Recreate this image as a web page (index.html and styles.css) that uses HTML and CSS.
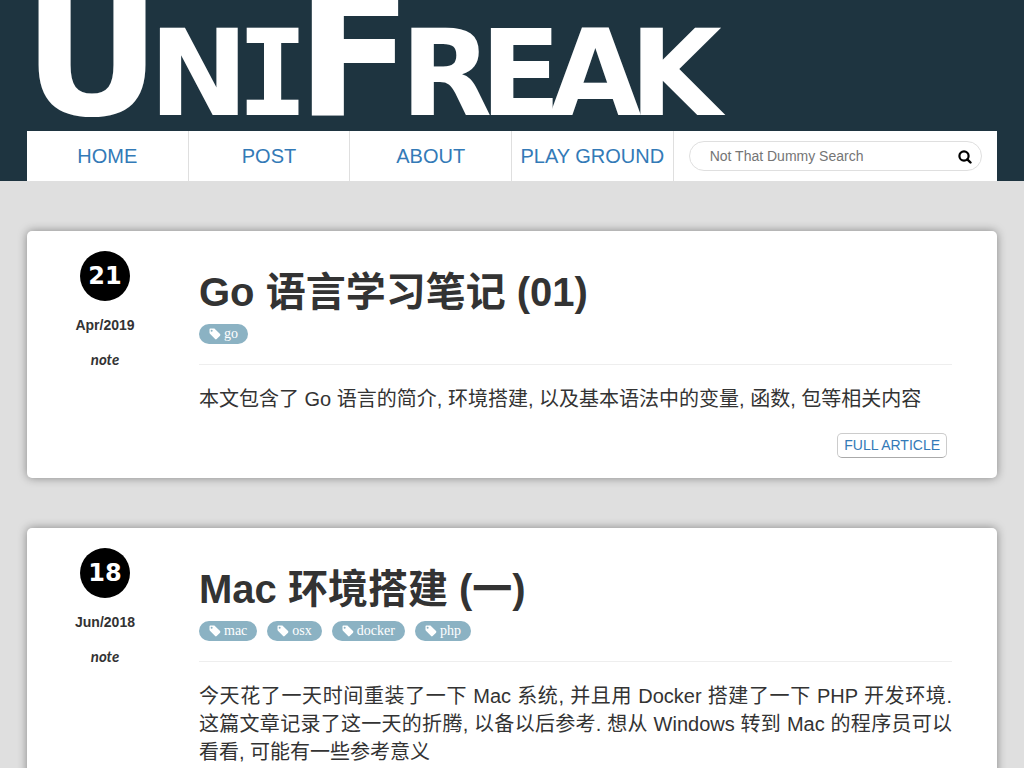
FILE: index.html
```html
<!DOCTYPE html>
<html lang="zh-CN">
<head>
<meta charset="utf-8">
<meta name="viewport" content="width=device-width, initial-scale=1">
<title>UniFreak</title>
<link rel="stylesheet" href="styles.css">
</head>
<body>
<svg class="sprite" aria-hidden="true">
  <symbol id="tag" viewBox="0 0 24 24"><path fill-rule="evenodd" d="M1 2.500v7.200c0 .8.4 1.500.9 2l10.300 10.400c.9.9 2.200.9 3.100 0l6.800-6.800c.9-.9.9-2.200 0-3.100L11.800 1.900C11.300 1.300 10.500 1 9.700 1H2.500C1.700 1 1 1.700 1 2.500zM5.300 3.300a2 2 0 1 1 0 4 2 2 0 0 1 0-4z"/></symbol>
  <symbol id="search" viewBox="0 0 14 14"><circle cx="6" cy="6" r="4.600" fill="none" stroke="currentColor" stroke-width="2.200"/><path d="M9.300 9.300l3.200 3.200" stroke="currentColor" stroke-width="2.400" stroke-linecap="round"/></symbol>
</svg>
<header class="header">
  <div class="container">
    <h1 class="logo">Un<span class="logo-slab">i</span>Freak</h1>
    <div class="bar">
      <nav class="nav">
        <a href="#">HOME</a>
        <a href="#">POST</a>
        <a href="#">ABOUT</a>
        <a href="#">PLAY GROUND</a>
      </nav>
      <form class="search">
        <input class="search-input" type="text" aria-label="Search" placeholder="Not That Dummy Search">
        <button class="search-button" type="submit" aria-label="Search"><svg class="search-icon"><use href="#search"/></svg></button>
      </form>
    </div>
  </div>
</header>
<main class="container posts">
  <article class="post">
    <div class="meta">
      <div class="day">21</div>
      <div class="month">Apr/2019</div>
      <div class="kind">note</div>
    </div>
    <div class="content">
      <h2 class="title">Go 语言学习笔记 (01)</h2>
      <div class="tags">
        <a class="tag" href="#"><svg class="tag-icon"><use href="#tag"/></svg>go</a>
      </div>
      <p class="summary">本文包含了 Go 语言的简介, 环境搭建, 以及基本语法中的变量, 函数, 包等相关内容</p>
      <a class="more" href="#">FULL ARTICLE</a>
    </div>
  </article>
  <article class="post">
    <div class="meta">
      <div class="day">18</div>
      <div class="month">Jun/2018</div>
      <div class="kind">note</div>
    </div>
    <div class="content">
      <h2 class="title">Mac 环境搭建 (一)</h2>
      <div class="tags">
        <a class="tag" href="#"><svg class="tag-icon"><use href="#tag"/></svg>mac</a>
        <a class="tag" href="#"><svg class="tag-icon"><use href="#tag"/></svg>osx</a>
        <a class="tag" href="#"><svg class="tag-icon"><use href="#tag"/></svg>docker</a>
        <a class="tag" href="#"><svg class="tag-icon"><use href="#tag"/></svg>php</a>
      </div>
      <p class="summary">今天花了一天时间重装了一下 Mac 系统, 并且用 Docker 搭建了一下 PHP 开发环境. 这篇文章记录了这一天的折腾, 以备以后参考. 想从 Windows 转到 Mac 的程序员可以看看, 可能有一些参考意义</p>
      <a class="more" href="#">FULL ARTICLE</a>
    </div>
  </article>
</main>
</body>
</html>
```
FILE: styles.css
```css
* { box-sizing: border-box; }
body {
  margin: 0;
  background: #dfdfdf;
  color: #333;
  font: 20px/28px "Liberation Sans", "Noto Sans CJK SC", sans-serif;
}
a { color: #337ab7; text-decoration: none; }
.sprite { display: none; }
.container { max-width: 970px; margin: 0 auto; }

.header { background: #1e3440; }
.logo {
  margin: 0 0 0 -4px;
  padding-bottom: 19px;
  color: #fff;
  font: bold 170px/112px "DejaVu Sans", sans-serif;
  font-variant-caps: small-caps;
  letter-spacing: -12px;
  white-space: nowrap;
}
.logo-slab { font-family: "DejaVu Sans Mono", monospace; }

.bar { display: grid; grid-template-columns: 2fr 1fr; background: #fff; }
.nav { display: grid; grid-template-columns: repeat(4, 1fr); }
.nav a {
  line-height: 50px;
  text-align: center;
  white-space: nowrap;
  border-right: 1px solid #dfdfdf;
}
.search { display: flex; align-items: center; margin: 10px 15px; border: 1px solid #dfdfdf; border-radius: 15px; }
.search-input {
  flex: 1;
  min-width: 0;
  padding: 0 0 0 20px;
  border: 0;
  outline: 0;
  background: none;
  font: 14px/20px "Liberation Sans", sans-serif;
}
.search-input::placeholder { color: #757575; }
.search-button { display: flex; padding: 2px 9px 0; border: 0; background: none; color: #000; }
.search-icon { width: 14px; height: 14px; }

.post {
  display: grid;
  grid-template-columns: 156px 1fr;
  column-gap: 16px;
  margin: 50px 0;
  padding: 20px 45px 20px 0;
  background: #fff;
  border-radius: 5px;
  box-shadow: 0 0 10px rgba(0, 0, 0, .4);
}
.meta {
  display: flex;
  flex-direction: column;
  align-items: center;
  gap: 14px;
  font-size: 14px;
  font-weight: bold;
  line-height: 20px;
}
.day {
  width: 50px;
  border-radius: 50%;
  background: #000;
  color: #fff;
  font: bold 24px/50px "DejaVu Sans", sans-serif;
  text-align: center;
}
.kind { font-family: Lato, cursive; font-size: 15px; font-style: italic; }
.content { display: flex; flex-direction: column; padding-top: 19px; }
.title { margin: 0 0 10px; font-size: 40px; line-height: 44px; }
.tags { display: flex; gap: 10px; padding-bottom: 20px; border-bottom: 1px solid #eee; }
.tag {
  display: flex;
  align-items: center;
  gap: 3px;
  padding: 0 10px;
  border-radius: 10px;
  background: #8bb2c3;
  color: #fff;
  font: 14px/20px "Liberation Serif", serif;
}
.tag-icon { width: 12px; height: 12px; fill: currentColor; }
.summary { margin: 20px 0; text-align: justify; }
.more {
  align-self: flex-end;
  margin-right: 5px;
  padding: 0 6px;
  border: 1px solid #ccc;
  border-bottom-color: #aaa;
  border-radius: 5px;
  font-size: 14px;
  line-height: 23px;
}
```
